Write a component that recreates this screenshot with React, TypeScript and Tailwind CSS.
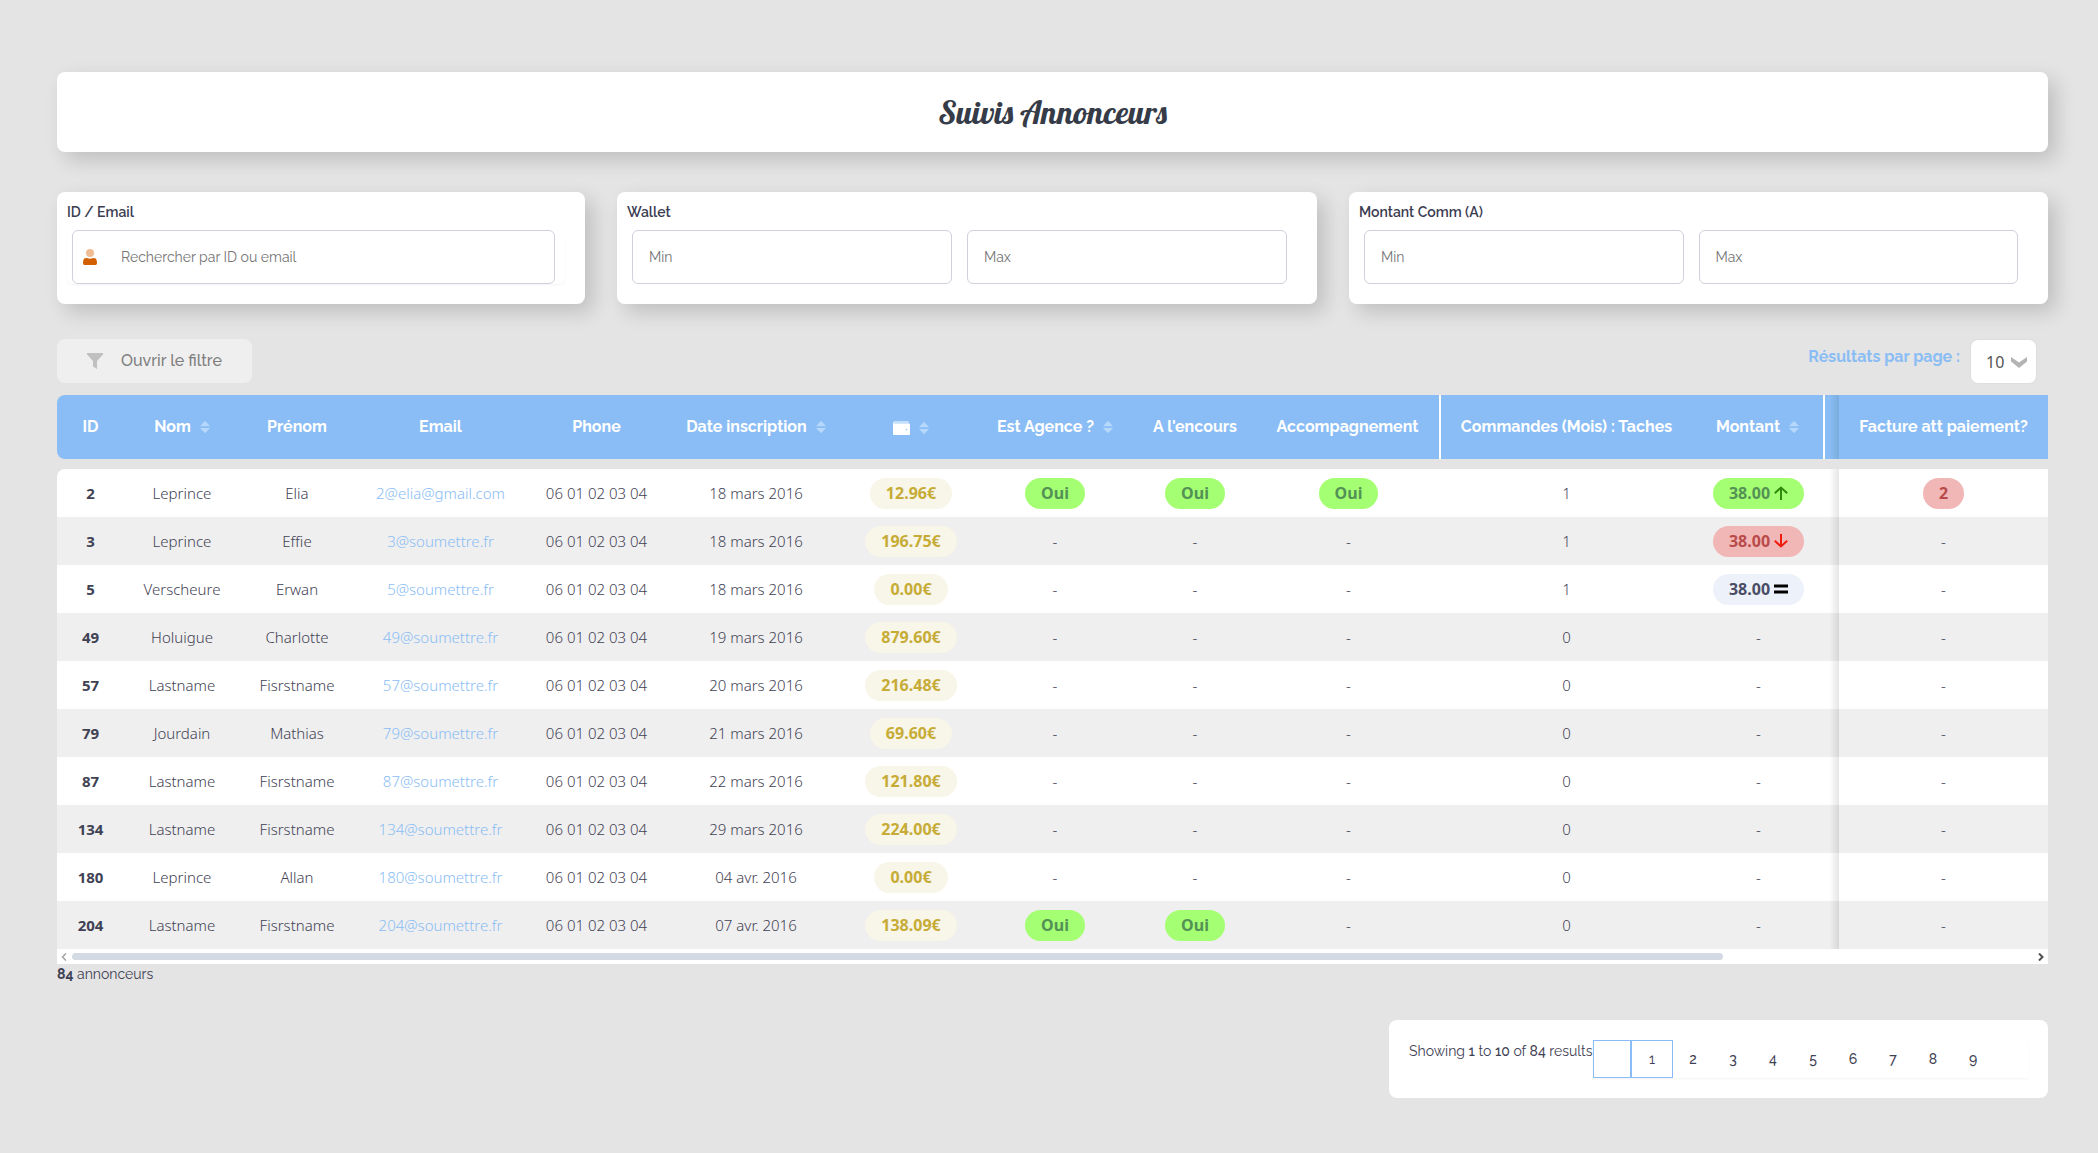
import React from "react";

type Trend = "up" | "down" | "equal";

interface Advertiser {
  id: number;
  nom: string;
  prenom: string;
  email: string;
  date: string;
  wallet: string;
  agence?: boolean;
  encours?: boolean;
  accompagnement?: boolean;
  taches: number;
  trend?: Trend;
  factures?: number;
}

const PHONE = "06 01 02 03 04";

const advertisers: Advertiser[] = [
  { id: 2, nom: "Leprince", prenom: "Elia", email: "2@elia@gmail.com", date: "18 mars 2016", wallet: "12.96€", agence: true, encours: true, accompagnement: true, taches: 1, trend: "up", factures: 2 },
  { id: 3, nom: "Leprince", prenom: "Effie", email: "3@soumettre.fr", date: "18 mars 2016", wallet: "196.75€", taches: 1, trend: "down" },
  { id: 5, nom: "Verscheure", prenom: "Erwan", email: "5@soumettre.fr", date: "18 mars 2016", wallet: "0.00€", taches: 1, trend: "equal" },
  { id: 49, nom: "Holuigue", prenom: "Charlotte", email: "49@soumettre.fr", date: "19 mars 2016", wallet: "879.60€", taches: 0 },
  { id: 57, nom: "Lastname", prenom: "Fisrstname", email: "57@soumettre.fr", date: "20 mars 2016", wallet: "216.48€", taches: 0 },
  { id: 79, nom: "Jourdain", prenom: "Mathias", email: "79@soumettre.fr", date: "21 mars 2016", wallet: "69.60€", taches: 0 },
  { id: 87, nom: "Lastname", prenom: "Fisrstname", email: "87@soumettre.fr", date: "22 mars 2016", wallet: "121.80€", taches: 0 },
  { id: 134, nom: "Lastname", prenom: "Fisrstname", email: "134@soumettre.fr", date: "29 mars 2016", wallet: "224.00€", taches: 0 },
  { id: 180, nom: "Leprince", prenom: "Allan", email: "180@soumettre.fr", date: "04 avr. 2016", wallet: "0.00€", taches: 0 },
  { id: 204, nom: "Lastname", prenom: "Fisrstname", email: "204@soumettre.fr", date: "07 avr. 2016", wallet: "138.09€", agence: true, encours: true, taches: 0 },
];

const columns: { label: React.ReactNode; width: string; sortable?: boolean; cell?: string }[] = [
  { label: "ID", width: "w-[67px]", cell: "rounded-l-lg" },
  { label: "Nom", width: "w-[116px]", sortable: true },
  { label: "Prénom", width: "w-[114px]" },
  { label: "Email", width: "w-[173px]" },
  { label: "Phone", width: "w-[139px]" },
  { label: "Date inscription", width: "w-[180px]", sortable: true },
  { label: <WalletIcon />, width: "w-[130px]", sortable: true },
  { label: "Est Agence ?", width: "w-[158px]", sortable: true },
  { label: "A l'encours", width: "w-[122px]" },
  { label: "Accompagnement", width: "w-[185px]", cell: "border-r-2 border-white" },
  { label: "Commandes (Mois) : Taches", width: "w-[251px]" },
  { label: "Montant", width: "w-[133px]", sortable: true, cell: "border-r-2 border-white" },
  { label: null, width: "w-[14px]", cell: "bg-linear-to-r from-transparent from-30% to-[#7aaede]" },
  { label: "Facture att paiement?", width: "w-[209px]" },
];

function WalletIcon() {
  return (
    <svg width="17" height="14" viewBox="0 0 17 14" role="img" aria-label="Wallet">
      <path d="M1.500 0H14.500a1.500 1.500 0 0 1 1.500 1.500V2.600H0V1.500A1.500 1.500 0 0 1 1.500 0Z" fill="#c4dffb" />
      <path d="M0 1.500Q.3 2.600 1.600 2.600H16Q17 2.600 17 3.600V13Q17 14 16 14H1Q0 14 0 13Z" fill="#fff" />
      <circle cx="13.500" cy="8.500" r="0.800" fill="#8abdf5" />
    </svg>
  );
}

function SortIcon() {
  return (
    <svg width="10" height="12" viewBox="0 0 10 12" aria-hidden="true">
      <path d="M0 5.200 4.200.5Q5-.2 5.800.5L10 5.200ZM0 6.900 4.200 11.500Q5 12.200 5.800 11.500L10 6.900Z" fill="#b6d8fb" />
    </svg>
  );
}

function TrendIcon({ trend }: { trend: Trend }) {
  if (trend === "equal") {
    return (
      <svg width="14" height="14" viewBox="0 0 14 14" aria-hidden="true">
        <path d="M0 2.500h14v3H0zM0 8.500h14v3H0z" fill="#000" />
      </svg>
    );
  }
  return trend === "up" ? (
    <svg width="14" height="14" viewBox="0 0 14 14" aria-hidden="true">
      <path d="M7 14V1.500M.8 7.300 7 1.500 13.200 7.300" fill="none" stroke="#2f8a0c" strokeWidth="2" />
    </svg>
  ) : (
    <svg width="14" height="14" viewBox="0 0 14 14" aria-hidden="true">
      <path d="M7 0V12.500M.8 6.700 7 12.500 13.200 6.700" fill="none" stroke="#ee1c0c" strokeWidth="2" />
    </svg>
  );
}

const trendStyle: Record<Trend, string> = {
  up: "bg-[#a5ff73] text-[#539155]",
  down: "bg-[#f1b7b7] text-[#b94a4a]",
  equal: "bg-[#edf1f9] text-[#4a4c66]",
};

function Pill({ className, children }: { className: string; children: React.ReactNode }) {
  return (
    <span className={`inline-flex h-[31px] items-center gap-1 rounded-full px-4 align-middle text-base font-bold ${className}`}>
      {children}
    </span>
  );
}

function YesCell({ value }: { value?: boolean }) {
  return <td>{value ? <Pill className="bg-[#a5ff73] text-[#539155]">Oui</Pill> : "-"}</td>;
}

const cardShadow = "shadow-[8px_8px_20px_rgba(0,0,0,0.16)]";
const inputStyle =
  "h-[54px] w-full min-w-0 rounded-md border border-[#cfd1db] bg-white px-4 text-sm text-[#3f4254] placeholder:text-[#757575] outline-none";

function RangeCard({ title }: { title: string }) {
  return (
    <fieldset className={`min-w-0 rounded-lg bg-white px-2 pt-2 pb-5 ${cardShadow}`}>
      <legend className="float-left w-full px-[2px] text-sm leading-6 font-semibold text-[#3b3d52]">{title}</legend>
      <div className="clear-both flex gap-[15px] pt-[6px] pr-[22px] pl-[7px]">
        <input className={inputStyle} placeholder="Min" aria-label={`${title} min`} />
        <input className={inputStyle} placeholder="Max" aria-label={`${title} max`} />
      </div>
    </fieldset>
  );
}

export default function App() {
  return (
    <main className="min-h-screen bg-[#e4e4e4] pt-[72px] pr-[50px] pb-[55px] pl-[57px] font-[Raleway,Lato,sans-serif] text-[#3f4254]">
      <header className={`flex h-20 items-center justify-center rounded-lg bg-white ${cardShadow}`}>
        <h1 className="font-[Lobster,'Liberation_Serif',serif] text-[32px] text-[#363b48]">Suivis Annonceurs</h1>
      </header>

      <form className="mt-10 grid grid-cols-[528fr_700fr_699fr] gap-8">
        <div className={`min-w-0 rounded-lg bg-white px-2 pt-2 pb-5 ${cardShadow}`}>
          <label htmlFor="search" className="block px-[2px] text-sm leading-6 font-semibold text-[#3b3d52]">
            ID / Email
          </label>
          <div className="mt-[6px] mr-3 ml-[2px] rounded-md pr-[10px] pl-[5px] shadow-[0_1px_2px_rgba(0,0,0,0.05)]">
            <div className="grid items-center">
              <input
                id="search"
                className={`${inputStyle} col-start-1 row-start-1 pl-12`}
                placeholder="Rechercher par ID ou email"
              />
              <svg className="col-start-1 row-start-1 ml-[10px]" width="16" height="18" viewBox="0 0 16 18" aria-hidden="true">
                <circle cx="8" cy="5" r="4" fill="#efbc94" />
                <path d="M3 10.200Q4.600 9.600 5.600 10.300Q8 11.200 10.400 10.300Q11.400 9.600 13 10.200Q15 11 15 15Q15 17 13.500 17H2.500Q1 17 1 15Q1 11 3 10.200Z" fill="#d26000" />
              </svg>
            </div>
          </div>
        </div>
        <RangeCard title="Wallet" />
        <RangeCard title="Montant Comm (A)" />
      </form>

      <div className="mt-[35px] flex items-start justify-between">
        <button type="button" className="flex h-[44px] items-center gap-[18px] rounded-lg bg-[#efefef] px-[30px] text-base font-medium text-[#7e7e7e]">
          <svg width="16" height="16" viewBox="0 0 16 16" aria-hidden="true">
            <path d="M0 0H16V1.500L10 8V16L6 13.500V8L0 1.500Z" fill="#c0c0c0" />
          </svg>
          Ouvrir le filtre
        </button>
        <div className="flex items-start gap-[10px] pr-[11px]">
          <label htmlFor="per-page" className="pt-[6px] text-base leading-6 font-bold text-[#8abdf5]">
            Résultats par page :
          </label>
          <div className="grid items-center">
            <select
              id="per-page"
              defaultValue="10"
              className="col-start-1 row-start-1 h-[45px] w-[67px] appearance-none rounded-lg border border-[#dedede] bg-white pl-[15px] font-['Noto_Sans',sans-serif] text-base text-[#555]"
            >
              <option>10</option>
              <option>25</option>
              <option>50</option>
            </select>
            <svg className="pointer-events-none col-start-1 row-start-1 mr-[10px] justify-self-end" width="16" height="12" viewBox="0 0 16 12" aria-hidden="true">
              <path d="M0 1 8 6.500 16 1V5.500L8 12 0 5.500Z" fill="#b3b3b3" />
            </svg>
          </div>
        </div>
      </div>

      <section className="mt-[11px]" aria-label="Annonceurs">
        <table className="w-full table-fixed border-separate border-spacing-0 text-center">
          <colgroup>
            {columns.map((column, index) => (
              <col key={index} className={column.width} />
            ))}
          </colgroup>
          <thead>
            <tr className="h-16">
              {columns.map((column, index) => (
                <th key={index} className={`bg-[#8abdf5] text-base font-bold whitespace-nowrap text-white ${column.cell ?? ""}`}>
                  {column.sortable ? (
                    <button type="button" className="inline-flex items-center gap-[9px] align-middle">
                      {column.label}
                      <SortIcon />
                    </button>
                  ) : (
                    column.label
                  )}
                </th>
              ))}
            </tr>
            <tr className="h-[10px]" aria-hidden="true">
              <td colSpan={14} />
            </tr>
          </thead>
          <tbody className="font-['Segoe_UI','Noto_Sans',sans-serif] text-[15px] leading-[22px] font-light whitespace-nowrap">
            {advertisers.map((row) => (
              <tr key={row.id} className="group h-12 odd:*:bg-white even:*:bg-[#efefef]">
                <td className="font-bold group-first:rounded-tl-lg">{row.id}</td>
                <td>{row.nom}</td>
                <td>{row.prenom}</td>
                <td>
                  <a href={`mailto:${row.email}`} className="text-[#8abdf5]">
                    {row.email}
                  </a>
                </td>
                <td>{PHONE}</td>
                <td>{row.date}</td>
                <td>
                  <Pill className="bg-[#f8f5e9] text-[#c6ac36]">{row.wallet}</Pill>
                </td>
                <YesCell value={row.agence} />
                <YesCell value={row.encours} />
                <YesCell value={row.accompagnement} />
                <td>{row.taches}</td>
                <td>
                  {row.trend ? (
                    <Pill className={trendStyle[row.trend]}>
                      38.00
                      <TrendIcon trend={row.trend} />
                    </Pill>
                  ) : (
                    "-"
                  )}
                </td>
                <td className="bg-linear-to-r from-transparent from-30% to-black/10" />
                <td>{row.factures ? <Pill className="bg-[#f1b7b7] text-[#b94a4a]">{row.factures}</Pill> : "-"}</td>
              </tr>
            ))}
          </tbody>
        </table>

        <div className="flex h-[15px] items-center bg-white px-1">
          <svg width="6" height="8" viewBox="0 0 6 8" aria-hidden="true">
            <path d="M5 .5 1.500 4 5 7.500" fill="none" stroke="#a3a3a3" strokeWidth="1.500" />
          </svg>
          <div className="mx-[5px] grid flex-1 grid-cols-[842fr_158fr]">
            <div className="h-[7px] rounded-full bg-[#d3dae3]" />
          </div>
          <svg width="6" height="8" viewBox="0 0 6 8" aria-hidden="true">
            <path d="M1 .5 4.500 4 1 7.500" fill="none" stroke="#505050" strokeWidth="2" />
          </svg>
        </div>
        <p className="text-sm leading-5">
          <strong>84</strong> annonceurs
        </p>
      </section>

      <nav aria-label="Pagination" className="mt-9 ml-auto flex h-[78px] w-[659px] max-w-full rounded-lg bg-white px-5 pt-5">
        <p className="w-[184px] shrink-0 pt-[1px] text-sm leading-5 whitespace-nowrap">
          Showing <span className="font-medium">1</span> to <span className="font-medium">10</span> of{" "}
          <span className="font-medium">84</span> results
        </p>
        <div className="flex h-[38px] flex-1 text-sm font-medium shadow-[0_1px_2px_rgba(0,0,0,0.05)]">
          <button type="button" aria-label="Previous" className="w-[38px] border border-[#8abdf5]" />
          <button type="button" aria-current="page" className="w-[42px] border border-[#8abdf5] font-normal">
            1
          </button>
          {[2, 3, 4, 5, 6, 7, 8, 9].map((page) => (
            <button type="button" key={page} className="w-10">
              {page}
            </button>
          ))}
        </div>
      </nav>
    </main>
  );
}
